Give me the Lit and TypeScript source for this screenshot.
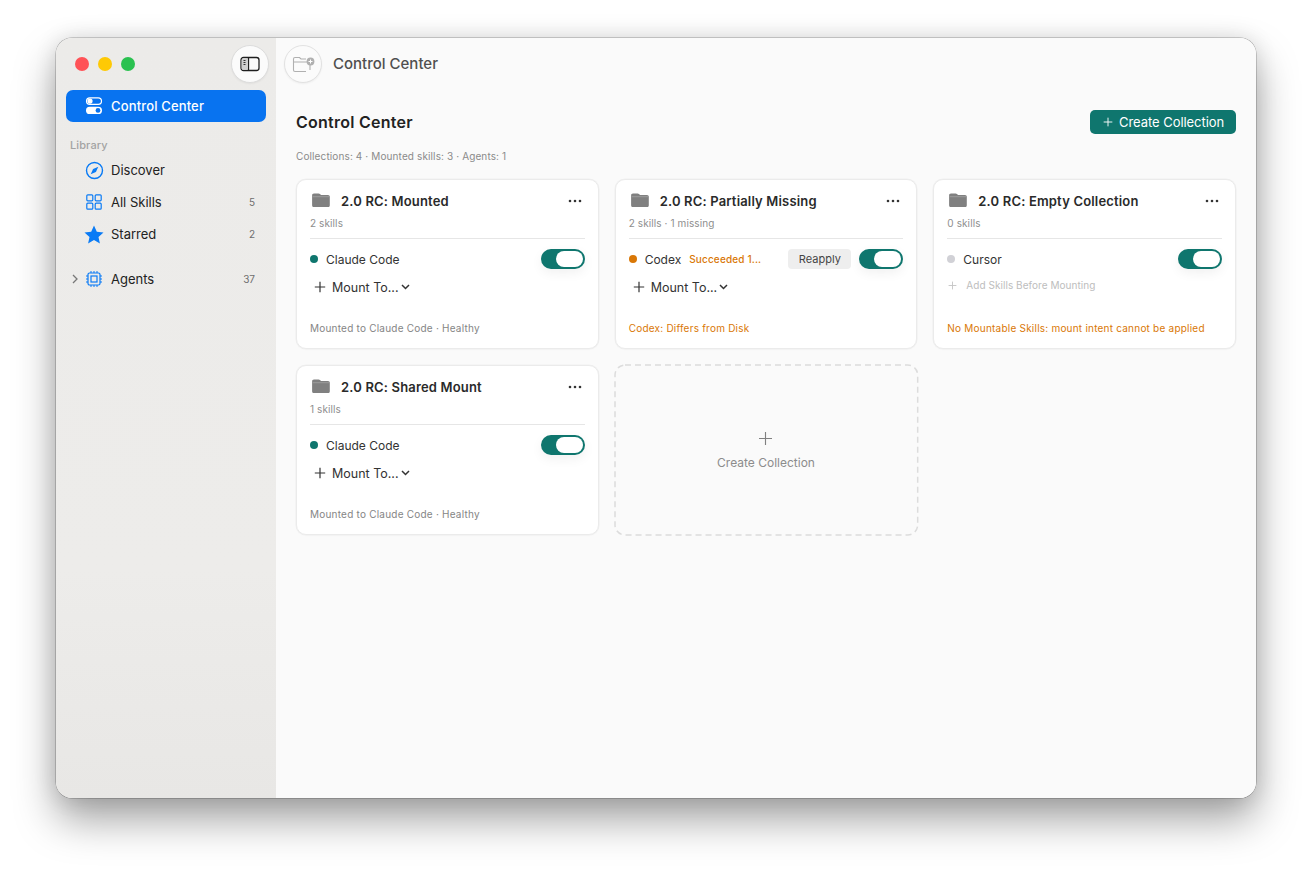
import { LitElement, html, css } from "lit";
import { customElement } from "lit/decorators.js";

const folder = html`<svg class="folder" width="18" height="15" viewBox="0 0 18 15"><path d="M2 0.5h4.600c.6 0 1 .2 1.400.6l1 1h7c1.100 0 1.800.7 1.800 1.800v8.300c0 1.200-.7 1.900-1.900 1.900H2C.8 14.100.1 13.400.1 12.200V2.400C.1 1.200.8.500 2 .5z" fill="#808080"/><path d="M.6 3.700h16.800" stroke="#a2a2a2" stroke-width=".8" fill="none"/></svg>`;
const dots = html`<svg width="14" height="4" viewBox="0 0 14 4"><circle cx="2" cy="2" r="1.300" fill="#333"/><circle cx="7" cy="2" r="1.300" fill="#333"/><circle cx="12" cy="2" r="1.300" fill="#333"/></svg>`;
const plus = (s: number, c: string, w = 1.2) => html`<svg width=${s} height=${s} viewBox="0 0 12 12"><path d="M6 .8v10.400M.8 6h10.400" stroke=${c} stroke-width=${w} fill="none"/></svg>`;
const chev = html`<svg width="9" height="6" viewBox="0 0 9 6"><path d="M1 1l3.500 3.500L8 1" stroke="#333" stroke-width="1.500" fill="none"/></svg>`;

interface Card { title: string; meta: string; dot: string; agent: string; status?: string; reapply?: boolean; empty?: boolean; foot: string; warn?: boolean; }
const cards: Card[] = [
  { title: "2.0 RC: Mounted", meta: "2 skills", dot: "#0f766e", agent: "Claude Code", foot: "Mounted to Claude Code · Healthy" },
  { title: "2.0 RC: Partially Missing", meta: "2 skills · 1 missing", dot: "#d97706", agent: "Codex", status: "Succeeded 1...", reapply: true, foot: "Codex: Differs from Disk", warn: true },
  { title: "2.0 RC: Empty Collection", meta: "0 skills", dot: "#d1d1d6", agent: "Cursor", empty: true, foot: "No Mountable Skills: mount intent cannot be applied", warn: true },
  { title: "2.0 RC: Shared Mount", meta: "1 skills", dot: "#0f766e", agent: "Claude Code", foot: "Mounted to Claude Code · Healthy" },
];

@customElement("app-root")
export class AppRoot extends LitElement {
  static styles = css`
    :host { display: block; width: 1312px; height: 872px; background: #fff; font-family: Inter, "Noto Sans", sans-serif; box-sizing: border-box; padding: 38px 56px 74px; overflow: hidden; }
    * { box-sizing: border-box; }
    .window { width: 1200px; height: 760px; display: flex; border-radius: 16px; overflow: hidden; }
    .shadowwrap { border-radius: 16px; box-shadow: 0 0 0 .5px rgba(0,0,0,.32), 0 22px 42px rgba(0,0,0,.36), 0 0 22px rgba(0,0,0,.12); height: 760px; }
    .side { width: 220px; background: linear-gradient(180deg,#ecebe9 0%,#edecea 70%,#e8e7e5 100%); padding: 0 10px; display: flex; flex-direction: column; }
    .chrome { height: 52px; display: flex; align-items: center; padding-left: 9px; position: relative; gap: 8px; flex: none; }
    .light { width: 14px; height: 14px; border-radius: 50%; margin-right: 1px; }
    .circ { width: 38px; height: 38px; border-radius: 50%; background: #fbfbfb; border: 1px solid #dcdcdc; display: flex; align-items: center; justify-content: center; box-shadow: 0 1px 2px rgba(0,0,0,.05); flex: none; }
    .chrome .circ { position: absolute; left: 165px; top: 7px; }
    .item { height: 32px; display: flex; align-items: center; font-size: 13px; color: #222; border-radius: 7px; padding: 0 11px 0 45px; position: relative; }
    .item .ic { position: absolute; left: 18px; top: 6px; width: 20px; height: 20px; display: flex; align-items: center; justify-content: center; }
    .item .n { margin-left: auto; font-size: 10px; color: #6e6e6e; }
    .active { background: #0873f0; color: #fff; font-weight: 500; letter-spacing: .15px; }
    .lib { font-size: 11px; font-weight: 500; color: #a3a3a3; padding: 17px 0 0 4px; height: 32px; line-height: 12px; letter-spacing: .1px; }
    .agents { margin-top: 13px; }
    .agents .car { position: absolute; left: 6px; top: 11px; }
    .main { flex: 1; background: #fafafa; display: flex; flex-direction: column; min-width: 0; }
    .top { height: 52px; display: flex; align-items: center; gap: 11px; padding-left: 8px; flex: none; }
    .top .circ { width: 38px; height: 38px; background: #fbfbfb; border-color: #e2e2e2; }
    .top span { font-size: 15px; font-weight: 500; color: #4f4f4f; padding-bottom: 2px; }
    .content { padding: 20px 20px 0; }
    .head { display: flex; justify-content: space-between; align-items: center; height: 24px; }
    h1 { font-size: 16px; font-weight: 600; color: #222; margin: 0; letter-spacing: .25px; }
    .btn { height: 24px; width: 146px; background: #0f766e; color: #fff; border-radius: 5px; font-size: 13px; display: flex; align-items: center; padding-left: 13px; gap: 6px; letter-spacing: -.05px; }
    .sub { font-size: 10px; color: #8a8a8a; margin-top: 16px; height: 13px; line-height: 13px; letter-spacing: .12px; }
    .grid { display: grid; grid-template-columns: repeat(3, 1fr); grid-auto-rows: 170px; gap: 16px; margin-top: 16px; }
    .card { background: #fff; border: 1px solid #ebebeb; border-radius: 10px; padding: 11px 13px 0 13px; display: flex; flex-direction: column; box-shadow: 0 0 0 .5px #f0f0f0, 0 1px 2px rgba(0,0,0,.02); }
    .t { display: flex; align-items: center; height: 19px; padding-left: 2px; }
    .t b { font-size: 13px; font-weight: 600; color: #2a2a2a; margin-left: 11px; letter-spacing: .17px; }
    .t .more { margin-left: auto; margin-right: 3px; display: flex; }
    .meta { font-size: 10px; color: #8e8e8e; margin-top: 7px; height: 13px; line-height: 13px; letter-spacing: .1px; }
    hr { border: 0; border-top: 1px solid #e6e6e6; margin: 8px 0 0; width: 100%; }
    .row { display: flex; align-items: center; height: 20px; margin-top: 10px; }
    .dot { width: 8px; height: 8px; border-radius: 50%; margin-right: 8px; flex: none; margin-top: -1px; }
    .agent { font-size: 12px; color: #333; }
    .status { font-size: 10px; font-weight: 500; color: #d97706; margin-left: 8px; letter-spacing: .15px; }
    .reapply { margin-left: auto; width: 63px; height: 20px; background: #eeeeee; border-radius: 4px; font-size: 11px; color: #444; display: flex; align-items: center; justify-content: center; }
    .tog { width: 44px; height: 20px; border-radius: 10px; background: #0f766e; padding: 2px; display: flex; justify-content: flex-end; margin-left: auto; flex: none; box-shadow: 0 4px 12px rgba(0,0,0,.06); }
    .reapply + .tog { margin-left: 8px; }
    .tog i { display: block; width: 27px; height: 16px; border-radius: 8px; background: #fff; }
    .mount { display: flex; align-items: center; height: 20px; margin-top: 8px; padding-left: 4px; font-size: 12.500px; color: #333; }
    .mount span { margin: 0 2px 0 6px; }
    .mount.off { color: #bdbdbd; font-size: 10px; padding-left: 1px; letter-spacing: .05px; margin-top: 6px; }
    .mount.off span { margin-left: 9px; }
    .foot { font-size: 10px; color: #858585; margin-top: auto; margin-bottom: 13px; line-height: 13px; letter-spacing: .22px; }
    .foot.warn { color: #d97706; }
    .dashed { position: relative; display: flex; flex-direction: column; align-items: center; padding-top: 66px; gap: 9px; font-size: 12px; color: #8c8c8c; }
    .bd { position: absolute; inset: -1px; width: calc(100% + 2px); height: calc(100% + 2px); overflow: visible; }
    .bd rect { width: calc(100% - 2px); height: calc(100% - 2px); }
  `;

  private card(c: Card) {
    return html`<div class="card">
      <div class="t">${folder}<b>${c.title}</b><span class="more">${dots}</span></div>
      <div class="meta">${c.meta}</div>
      <hr />
      <div class="row">
        <span class="dot" style="background:${c.dot}"></span>
        <span class="agent">${c.agent}</span>
        ${c.status ? html`<span class="status">${c.status}</span>` : ""}
        ${c.reapply ? html`<span class="reapply">Reapply</span>` : ""}
        <span class="tog"><i></i></span>
      </div>
      ${c.empty
        ? html`<div class="mount off">${plus(9, "#c4c4c4")}<span>Add Skills Before Mounting</span></div>`
        : html`<div class="mount">${plus(12, "#333")}<span>Mount To...</span>${chev}</div>`}
      <div class="foot ${c.warn ? "warn" : ""}">${c.foot}</div>
    </div>`;
  }

  render() {
    return html`<div class="shadowwrap"><div class="window">
      <aside class="side">
        <div class="chrome">
          <span class="light" style="background:#ff5257"></span>
          <span class="light" style="background:#fec905"></span>
          <span class="light" style="background:#2ac150"></span>
          <div class="circ"><svg width="20" height="16" viewBox="0 0 20 16"><rect x="1" y="1.500" width="18" height="13" rx="2.500" fill="none" stroke="#1f1f1f" stroke-width="1.300"/><path d="M8.500 1.500v13" stroke="#1f1f1f" stroke-width="1.300"/><rect x="1.700" y="2.200" width="6.300" height="11.600" rx="1.500" fill="#cfcfcf"/><path d="M3.500 4.500h2M3.500 6.500h2M3.500 8.500h2" stroke="#333" stroke-width="1"/></svg></div>
        </div>
        <div class="item active">
          <span class="ic"><svg width="18" height="18" viewBox="0 0 18 18"><rect x="1.500" y=".8" width="15" height="6.600" rx="3.300" fill="none" stroke="#fff" stroke-width="1.200"/><circle cx="5" cy="4.100" r="2.600" fill="#fff"/><rect x="1" y="9.800" width="16" height="7.200" rx="3.600" fill="#fff"/><circle cx="13" cy="13.400" r="2.400" fill="#0873f0"/></svg></span>
          Control Center
        </div>
        <div class="lib">Library</div>
        <div class="item">
          <span class="ic"><svg width="19" height="19" viewBox="0 0 19 19"><circle cx="9.500" cy="9.500" r="8" fill="none" stroke="#0a7bf5" stroke-width="1.400"/><path d="M13.300 5.700l-2.400 5.200-5.200 2.400 2.400-5.200z" fill="#0a7bf5"/></svg></span>
          Discover
        </div>
        <div class="item">
          <span class="ic"><svg width="16" height="16" viewBox="0 0 16 16" fill="none" stroke="#0a7bf5" stroke-width="1.200"><rect x=".8" y=".8" width="6" height="6" rx="1"/><rect x="9.200" y=".8" width="6" height="6" rx="1"/><rect x=".8" y="9.200" width="6" height="6" rx="1"/><rect x="9.200" y="9.200" width="6" height="6" rx="1"/></svg></span>
          All Skills<span class="n">5</span>
        </div>
        <div class="item">
          <span class="ic"><svg width="20" height="19" viewBox="0 0 20 19"><path d="M10 .5l2.800 6.200 6.700.7-5 4.500 1.400 6.600-5.900-3.400-5.900 3.400 1.400-6.600-5-4.500 6.700-.7z" fill="#0a7bf5"/></svg></span>
          Starred<span class="n">2</span>
        </div>
        <div class="item agents">
          <svg class="car" width="6" height="10" viewBox="0 0 6 10"><path d="M1 1l4 4-4 4" fill="none" stroke="#777" stroke-width="1.300"/></svg>
          <span class="ic"><svg width="16" height="16" viewBox="0 0 16 16" fill="none" stroke="#0a7bf5"><rect x="2" y="2" width="12" height="12" rx="1.500" stroke-width="1.200"/><rect x="5" y="5" width="6" height="6" stroke-width="1.200"/><path d="M5 0v2M8 0v2M11 0v2M5 14v2M8 14v2M11 14v2M0 5h2M0 8h2M0 11h2M14 5h2M14 8h2M14 11h2" stroke-width="1"/></svg></span>
          Agents<span class="n">37</span>
        </div>
      </aside>
      <main class="main">
        <div class="top">
          <div class="circ"><svg width="24" height="18" viewBox="0 0 24 18" fill="none" stroke="#b0b0b0" stroke-width="1.100"><path d="M15 16.500H4c-1 0-1.500-.5-1.500-1.500V4c0-1 .5-1.500 1.500-1.500h4.500L10 4h5"/><path d="M2.500 7h16.500v8"/><circle cx="19.500" cy="6.500" r="3.900" fill="#b0b0b0" stroke="none"/><path d="M19.500 4.500v4M17.500 6.500h4" stroke="#fff" stroke-width="1"/></svg></div>
          <span>Control Center</span>
        </div>
        <div class="content">
          <div class="head"><h1>Control Center</h1><div class="btn">${plus(10, "#fff", 1.1)}Create Collection</div></div>
          <div class="sub">Collections: 4 · Mounted skills: 3 · Agents: 1</div>
          <div class="grid">
            ${this.card(cards[0])}${this.card(cards[1])}${this.card(cards[2])}${this.card(cards[3])}
            <div class="dashed">
              <svg class="bd"><rect x="1" y="1" rx="10" ry="10" fill="none" stroke="#dcdcdc" stroke-width="1.500" stroke-dasharray="6 4"/></svg>
              ${plus(15, "#808080", .9)}<span>Create Collection</span>
            </div>
          </div>
        </div>
      </main>
    </div></div>`;
  }
}
